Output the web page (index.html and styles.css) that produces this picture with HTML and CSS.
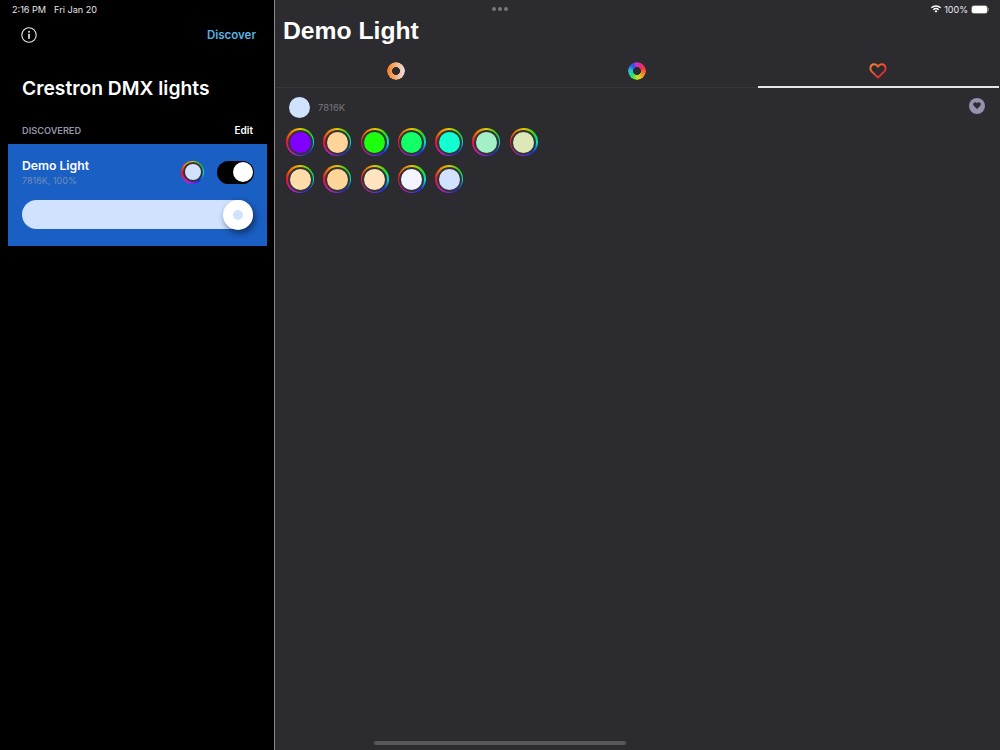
FILE: index.html
```html
<!DOCTYPE html>
<html lang="en">
<head>
  <meta charset="UTF-8">
  <meta name="viewport" content="width=device-width, initial-scale=1.0">
  <title>Crestron DMX lights</title>
  <link rel="stylesheet" href="styles.css">
</head>
<body>
  <div class="app">
    <aside class="sidebar">
      <div class="status-left">
        <span>2:16 PM</span>
        <span>Fri Jan 20</span>
      </div>
      <div class="sidebar-top">
        <svg class="info-icon" width="16" height="16" viewBox="0 0 16 16">
          <circle cx="8" cy="8" r="7.2" fill="none" stroke="#e8e8e8" stroke-width="1.1"/>
          <rect x="7.2" y="6.8" width="1.6" height="5" fill="#f4f4f4"/>
          <rect x="7.2" y="3.9" width="1.6" height="1.7" fill="#f4f4f4"/>
        </svg>
        <span class="discover">Discover</span>
      </div>
      <h2 class="sidebar-title">Crestron DMX lights</h2>
      <div class="section-head">
        <span class="section-label">DISCOVERED</span>
        <span class="edit">Edit</span>
      </div>
      <div class="light-card">
        <div class="light-row">
          <div class="light-text">
            <div class="light-name">Demo Light</div>
            <div class="light-sub">7816K, 100%</div>
          </div>
          <div class="ring ring-small"><span class="ring-inner" style="background-color:#d0e2ff"></span></div>
          <div class="toggle"><span class="toggle-knob"></span></div>
        </div>
        <div class="slider"><span class="slider-thumb"><span class="slider-dot"></span></span></div>
      </div>
    </aside>

    <main class="main">
      <div class="status-right">
        <svg width="10" height="8" viewBox="0 0 22 17">
          <path d="M1 6 A14 14 0 0 1 21 6" fill="none" stroke="#fff" stroke-width="3"/>
          <path d="M5 10 A9 9 0 0 1 17 10" fill="none" stroke="#fff" stroke-width="3"/>
          <path d="M7.5 13 A5 5 0 0 1 14.5 13 L11 17 Z" fill="#fff"/>
        </svg>
        <span>100%</span>
        <span class="battery"><span class="battery-level"></span></span>
        <span class="battery-tip"></span>
      </div>
      <h1 class="main-title">Demo Light</h1>
      <div class="tabs">
        <div class="tab"><span class="tab-icon tab-temp"></span></div>
        <div class="tab"><span class="tab-icon tab-color"></span></div>
        <div class="tab tab-active">
          <svg width="18" height="16" viewBox="0 0 18 16">
            <defs>
              <linearGradient id="heartGrad" x1="0" y1="0" x2="1" y2="1">
                <stop offset="0" stop-color="#f58a2c"/>
                <stop offset="0.7" stop-color="#e62f35"/>
              </linearGradient>
            </defs>
            <path d="M9 14.6 L2.6 8.4 C0.4 6.2 1.3 1.6 5 1.3 C6.8 1.2 8.2 2.2 9 3.7 C9.8 2.2 11.2 1.2 13 1.3 C16.7 1.6 17.6 6.2 15.4 8.4 Z" fill="none" stroke="url(#heartGrad)" stroke-width="1.9" stroke-linejoin="round"/>
          </svg>
        </div>
      </div>
      <div class="current-row">
        <span class="current-color"></span>
        <span class="current-label">7816K</span>
        <span class="fav-button">
          <svg width="8" height="7" viewBox="0 0 10 9">
            <path d="M5 9 L0.8 4.8 C-0.6 3.2 0.3 0.4 2.6 0.3 C3.6 0.3 4.5 0.8 5 1.6 C5.5 0.8 6.4 0.3 7.4 0.3 C9.7 0.4 10.6 3.2 9.2 4.8 Z" fill="#2c2c30"/>
          </svg>
        </span>
      </div>
      <div class="swatches">
        <div class="ring"><span class="ring-inner" style="background-color:#8000ff"></span></div>
        <div class="ring"><span class="ring-inner" style="background-color:#ffd599"></span></div>
        <div class="ring"><span class="ring-inner" style="background-color:#1eff10"></span></div>
        <div class="ring"><span class="ring-inner" style="background-color:#12ff66"></span></div>
        <div class="ring"><span class="ring-inner" style="background-color:#12ffd0"></span></div>
        <div class="ring"><span class="ring-inner" style="background-color:#a4f0c6"></span></div>
        <div class="ring"><span class="ring-inner" style="background-color:#dce8b8"></span></div>
        <div class="ring"><span class="ring-inner" style="background-color:#ffdcaa"></span></div>
        <div class="ring"><span class="ring-inner" style="background-color:#ffd599"></span></div>
        <div class="ring"><span class="ring-inner" style="background-color:#ffe4c0"></span></div>
        <div class="ring"><span class="ring-inner" style="background-color:#f2f5ff"></span></div>
        <div class="ring"><span class="ring-inner" style="background-color:#d0e2ff"></span></div>
      </div>
    </main>
  </div>
  <div class="dots"><span></span><span></span><span></span></div>
  <div class="home-bar"></div>
</body>
</html>
```

FILE: styles.css
```css
* {
  box-sizing: border-box;
}
html, body {
  margin: 0;
  height: 100%;
  overflow: hidden;
}
body {
  background: #000;
  color: #fff;
  font-family: "Inter", "Liberation Sans", sans-serif;
}
.app {
  display: flex;
  height: 750px;
}

/* left column */
.sidebar {
  width: 275px;
  flex: none;
  background: #000;
  border-right: 1px solid #8a8a8a;
}
.status-left {
  display: flex;
  gap: 8px;
  height: 18px;
  padding-left: 12px;
  align-items: center;
  font-size: 9.1px;
  color: #e4e4e4;
}
.sidebar-top {
  display: flex;
  justify-content: space-between;
  align-items: center;
  height: 32px;
  padding: 1px 18px 0 21px;
}
.discover {
  font-size: 11.5px;
  font-weight: 600;
  color: #57b4e4;
}
.sidebar-title {
  margin: 22px 0 0 22px;
  height: 32px;
  line-height: 33px;
  font-size: 19.3px;
  font-weight: 600;
}
.section-head {
  display: flex;
  justify-content: space-between;
  align-items: center;
  height: 20px;
  margin-top: 16px;
  padding: 0 21px 0 22px;
}
.section-label {
  font-size: 9.2px;
  font-weight: 600;
  color: #9494a8;
}
.edit {
  font-size: 10px;
  font-weight: 600;
}
.light-card {
  width: 259px;
  height: 102px;
  margin: 4px 0 0 8px;
  padding: 16px 13px 0 14px;
  background: #1a5fc4;
}
.light-row {
  display: flex;
  align-items: center;
  height: 24px;
}
.light-text {
  flex: 1;
  margin-top: 2px;
}
.light-name {
  font-size: 12.2px;
  font-weight: 600;
  line-height: 14px;
}
.light-sub {
  margin-top: 2px;
  font-size: 9px;
  line-height: 12px;
  color: #6f8dbb;
}
.toggle {
  display: flex;
  justify-content: flex-end;
  align-items: center;
  width: 37px;
  height: 23px;
  margin-left: 13px;
  padding-right: 1px;
  border-radius: 12px;
  background: #000;
}
.toggle-knob {
  width: 20px;
  height: 20px;
  border-radius: 50%;
  background: #fff;
}
.slider {
  display: flex;
  justify-content: flex-end;
  align-items: center;
  height: 29px;
  margin: 16px 1px 0 0;
  border-radius: 15px;
  background: #d0e2ff;
}
.slider-thumb {
  display: flex;
  justify-content: center;
  align-items: center;
  width: 30px;
  height: 30px;
  border-radius: 50%;
  background: #fff;
  box-shadow: 2px 3px 6px rgba(0, 0, 0, 0.5);
}
.slider-dot {
  width: 10px;
  height: 10px;
  border-radius: 50%;
  background: #d0e2ff;
}

/* rainbow ring around a colour */
.ring {
  width: 28px;
  height: 28px;
  padding: 1.5px;
  border-radius: 50%;
  background: conic-gradient(#e8c800, #20e010 50deg, #00e0e0 95deg, #1030f0 140deg, #c020d0 210deg, #f01030 270deg, #f08000 320deg, #e8c800);
}
.ring-small {
  width: 23px;
  height: 23px;
  flex: none;
}
.ring-inner {
  display: block;
  width: 100%;
  height: 100%;
  border: 2px solid #333336;
  border-radius: 50%;
}

/* right side */
.main {
  flex: 1;
  background: #2c2c30;
}
.status-right {
  display: flex;
  justify-content: flex-end;
  align-items: center;
  gap: 3px;
  height: 18px;
  padding-right: 11px;
  font-size: 9px;
  color: #e8e8e8;
}
.battery {
  display: block;
  width: 17px;
  height: 9px;
  border: 1px solid #77777a;
  border-radius: 3px;
}
.battery-level {
  display: block;
  height: 100%;
  border-radius: 1.5px;
  background: #fff;
}
.battery-tip {
  width: 1px;
  height: 3px;
  margin-left: -3px;
  background: #77777a;
}
.main-title {
  margin: 0 0 0 8px;
  height: 27px;
  line-height: 26px;
  font-family: "Liberation Sans", sans-serif;
  font-size: 24.7px;
  font-weight: 700;
}
.tabs {
  display: grid;
  grid-template-columns: repeat(3, 1fr);
  height: 43px;
  margin-right: 1px;
  border-bottom: 1px solid #36363a;
}
.tab {
  display: flex;
  justify-content: center;
  align-items: center;
  height: 43px;
  padding-top: 13px;
  padding-bottom: 4px;
}
.tab-active {
  border-bottom: 2px solid #e6e6e6;
  padding-bottom: 2px;
}
.tab-icon {
  width: 18px;
  height: 18px;
  border-radius: 50%;
  -webkit-mask: radial-gradient(circle, transparent 3.7px, #000 4.2px);
  mask: radial-gradient(circle, transparent 3.7px, #000 4.2px);
}
.tab-temp {
  background: linear-gradient(90deg, #f57f20, #f5b070 45%, #e8e0e8);
}
.tab-color {
  background: conic-gradient(#d030c0, #f03050 60deg, #f09020 120deg, #d0e020 170deg, #30e060 225deg, #20c0e0 275deg, #3050f0 320deg, #d030c0);
}
.current-row {
  display: flex;
  align-items: center;
  height: 37px;
  padding: 2px 15px 0 14px;
}
.current-color {
  width: 21px;
  height: 21px;
  border-radius: 50%;
  background: #d0e2ff;
}
.current-label {
  flex: 1;
  margin-left: 8px;
  font-size: 9.5px;
  color: #77777f;
}
.fav-button {
  display: flex;
  justify-content: center;
  align-items: center;
  width: 16px;
  height: 16px;
  margin-top: -4px;
  border-radius: 50%;
  background: #9393b0;
}
.swatches {
  display: grid;
  grid-template-columns: repeat(7, 28px);
  gap: 9px 9.3px;
  margin: 3px 0 0 11px;
}

/* overlays */
.dots {
  position: absolute;
  top: 7px;
  left: 492px;
  display: flex;
  gap: 2px;
}
.dots span {
  width: 4px;
  height: 4px;
  border-radius: 50%;
  background: #77777c;
}
.home-bar {
  position: absolute;
  left: 374px;
  top: 741px;
  width: 252px;
  height: 4px;
  border-radius: 2px;
  background: #58585a;
}
```
